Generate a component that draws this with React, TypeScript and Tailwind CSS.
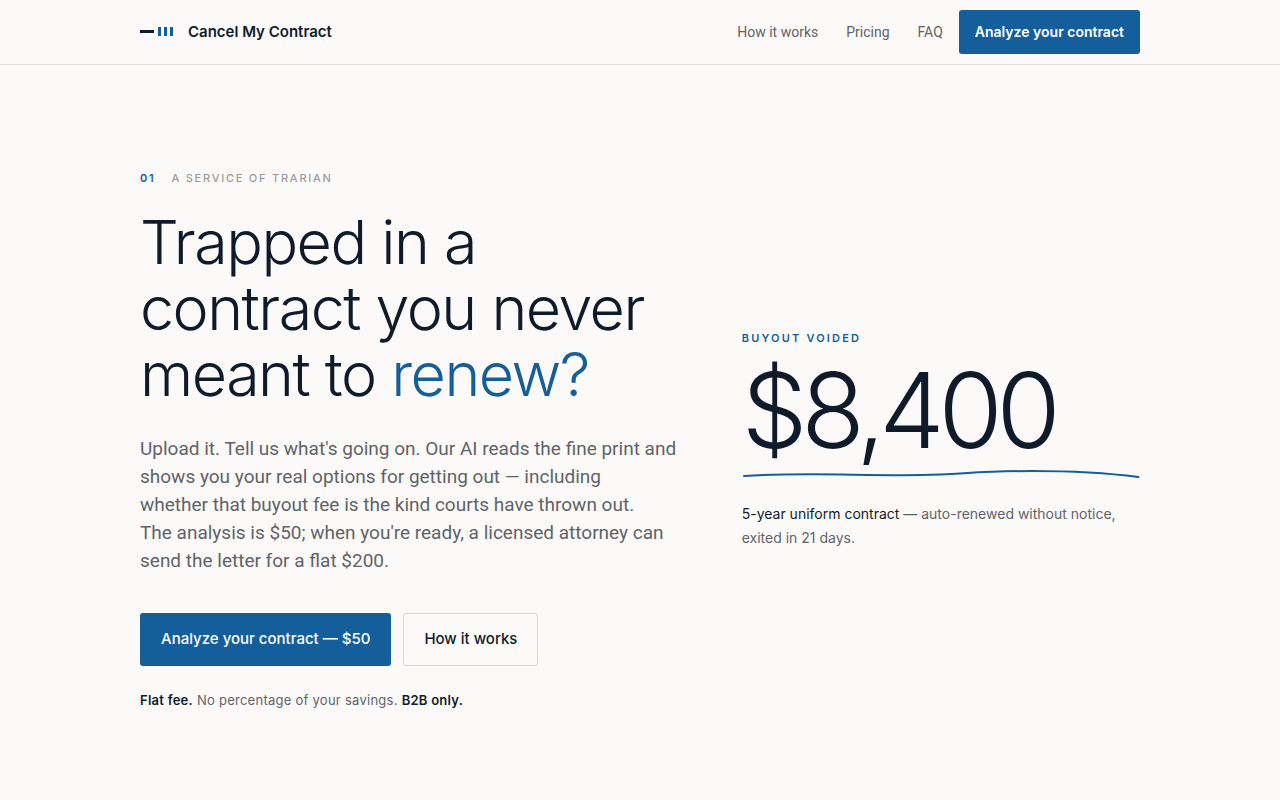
import type { ReactNode } from "react";

const NAV_LINKS = [
    { label: "How it works", href: "#how-it-works" },
    { label: "Pricing", href: "#pricing" },
    { label: "FAQ", href: "#faq" },
];

export default function App() {
    return (
        <div className="min-h-screen bg-[#fcfaf8] font-['Inter','Liberation_Sans',sans-serif] text-[#0f1b2a] antialiased">
            <Header />
            <main>
                <Hero />
            </main>
        </div>
    );
}

function Header() {
    return (
        <header className="border-b border-[#e2e0de]">
            <div className="mx-auto flex h-16 max-w-[1000px] items-center justify-between">
                <a href="#top" className="flex items-center gap-3.5 text-[15px] font-semibold">
                    <LogoMark />
                    Cancel My Contract
                </a>
                <div className="flex items-center gap-4">
                    <nav className="flex items-center gap-7 font-['Roboto',sans-serif] text-sm text-[#5f6368]">
                        {NAV_LINKS.map((link) => (
                            <a key={link.href} href={link.href} className="hover:text-[#0f1b2a]">
                                {link.label}
                            </a>
                        ))}
                    </nav>
                    <a
                        href="#analyze"
                        className="flex h-11 items-center rounded-[3px] bg-[#155e9c] px-4 text-sm font-semibold text-white hover:bg-[#114d80]"
                    >
                        Analyze your contract
                    </a>
                </div>
            </div>
        </header>
    );
}

function Hero() {
    return (
        <section className="mx-auto grid max-w-[1000px] grid-cols-[1.35fr_1fr] items-center gap-16 py-[105px]">
            <div>
                <Eyebrow>
                    <span className="mr-4 font-semibold text-[#155e9c]">01</span>A service of Trarian
                </Eyebrow>
                <h1 className="mt-[23px] text-[61px] leading-[66px] font-light tracking-tight">
                    Trapped in a contract you never meant to <span className="text-[#155e9c]">renew?</span>
                </h1>
                <p className="mt-7 font-['Roboto',sans-serif] text-[19px] leading-7 text-[#5f6368]">
                    Upload it. Tell us what's going on. Our AI reads the fine print and shows you your real options for
                    getting out — including <br />
                    whether that buyout fee is the kind courts have thrown out. <br />
                    The analysis is $50; when you're ready, a licensed attorney can send the letter for a flat $200.
                </p>
                <div className="mt-[38px] flex gap-3 text-[15px] font-medium">
                    <a
                        href="#analyze"
                        className="flex h-[53px] items-center rounded-[3px] bg-[#155e9c] px-[21px] text-white hover:bg-[#114d80]"
                    >
                        Analyze your contract — $50
                    </a>
                    <a
                        href="#how-it-works"
                        className="flex h-[53px] items-center rounded-[3px] border border-[#d8d7d6] px-5 hover:border-[#0f1b2a]"
                    >
                        How it works
                    </a>
                </div>
                <p className="mt-6 text-[13px] leading-5 tracking-[0.02em] text-[#5f6368]">
                    <strong className="font-semibold text-[#0f1b2a]">Flat fee.</strong> No percentage of your savings.{" "}
                    <strong className="font-semibold text-[#0f1b2a]">B2B only.</strong>
                </p>
            </div>
            <Outcome />
        </section>
    );
}

function Outcome() {
    return (
        <div>
            <p className="text-[11px] leading-4 font-semibold tracking-[0.2em] text-[#155e9c] uppercase">
                Buyout voided
            </p>
            <p className="mt-2.5 text-[104px] leading-[108px] font-light tracking-[-0.06em]">$8,400</p>
            <svg
                className="mt-1 h-3.5 w-full"
                viewBox="0 0 398 14"
                preserveAspectRatio="none"
                fill="none"
                stroke="#155e9c"
                strokeWidth="2"
                strokeLinecap="round"
                aria-hidden="true"
            >
                <path d="M2 8C60 4 120 8 180 7C220 6 240 3 290 3C330 3 365 5 396 9" />
            </svg>
            <p className="mt-5 text-sm leading-6 text-[#5f6368]">
                <span className="text-[#0f1b2a]">5-year uniform contract</span> — auto-renewed without notice, exited in
                21 days.
            </p>
        </div>
    );
}

function Eyebrow({ children }: { children: ReactNode }) {
    return (
        <p className="text-[11px] leading-4 font-medium tracking-[0.16em] text-[#9a9b9d] uppercase">{children}</p>
    );
}

// A long dash cut off by three short bars
function LogoMark() {
    return (
        <svg width="34" height="12" viewBox="0 0 34 12" aria-hidden="true">
            <rect y="4" width="14" height="3" fill="#0f1b2a" />
            <rect x="18" y="1" width="3" height="9" fill="#155e9c" />
            <rect x="24" y="1" width="3" height="9" fill="#155e9c" />
            <rect x="30" y="1" width="3" height="9" fill="#155e9c" />
        </svg>
    );
}
